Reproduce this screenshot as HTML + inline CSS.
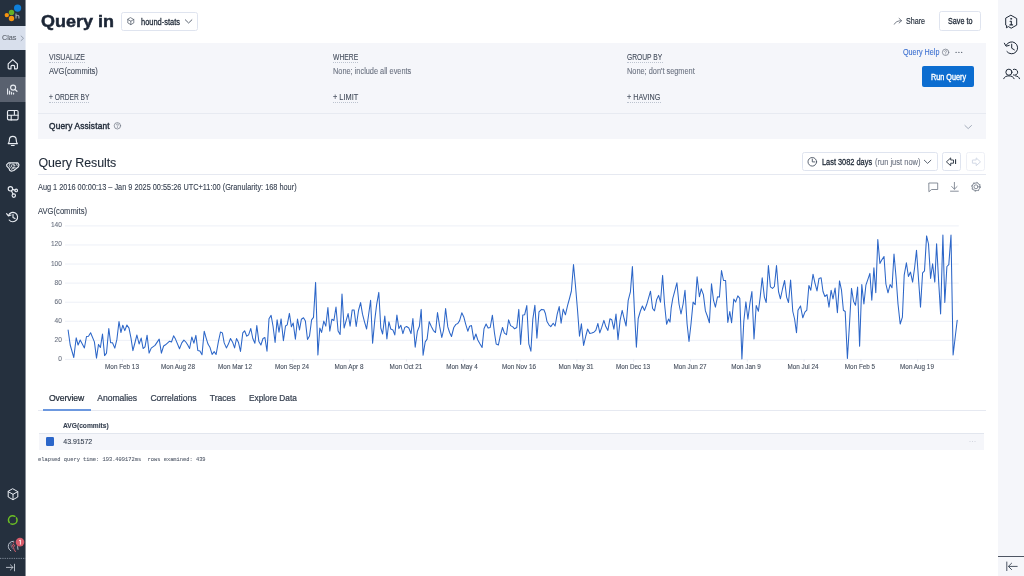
<!DOCTYPE html>
<html><head><meta charset="utf-8"><title>Query</title>
<style>
html,body{margin:0;padding:0;}
body{width:1024px;height:576px;overflow:hidden;background:#fff;font-family:"Liberation Sans",sans-serif;position:relative;}
.a{position:absolute;}
.t{position:absolute;white-space:pre;line-height:20px;height:20px;-webkit-text-stroke:0.1px;}
#wrap{position:absolute;left:0;top:0;width:1024px;height:576px;will-change:transform;}
.box{position:absolute;box-sizing:border-box;}
svg{position:absolute;overflow:visible;}
</style></head><body><div id="wrap">

<!-- left sidebar -->
<div class="box" style="left:0;top:0;width:26px;height:576px;background:#25303e;"></div>
<div class="box" style="left:0;top:25.9px;width:26px;height:24.4px;background:#d8dfec;"></div>
<div class="box" style="left:0;top:76.8px;width:26px;height:25.6px;background:#59616f;"></div>
<div class="box" style="left:25px;top:0;width:1px;height:576px;background:rgba(255,255,255,0.45);z-index:3;"></div>
<!-- right rail -->
<div class="box" style="left:998.2px;top:0;width:25.8px;height:576px;background:#f5f6fa;"></div>
<div class="box" style="left:998.2px;top:555.9px;width:25.8px;height:1.1px;background:#4e5563;"></div>
<!-- query builder panel -->
<div class="box" style="left:38px;top:42.8px;width:947.9px;height:96px;background:#f5f6fa;"></div>
<div class="box" style="left:38px;top:112.8px;width:947.9px;height:1px;background:#e7eaf1;"></div>
<!-- dataset dropdown -->
<div class="box" style="left:120.6px;top:11.6px;width:77.8px;height:19px;border:1px solid #dfe4ef;border-radius:2.4px;background:#fff;"></div>
<!-- save to -->
<div class="box" style="left:938.7px;top:11.3px;width:42.5px;height:19.3px;border:1px solid #dfe4ef;border-radius:2.4px;background:#fff;"></div>
<!-- run query -->
<div class="box" style="left:921.8px;top:66.4px;width:52.5px;height:20.6px;background:#0c6dd0;border-radius:2px;"></div>
<!-- time range -->
<div class="box" style="left:802px;top:151.9px;width:135.6px;height:19.3px;border:1px solid #dfe4ef;border-radius:2.4px;background:#fff;"></div>
<div class="box" style="left:941.9px;top:151.9px;width:19.1px;height:19.3px;border:1px solid #dfe4ef;border-radius:2.4px;background:#fff;"></div>
<div class="box" style="left:965.7px;top:151.9px;width:19.3px;height:19.3px;border:1px solid #eef0f6;border-radius:2.4px;background:#fff;"></div>
<!-- rules -->
<div class="box" style="left:38px;top:173.6px;width:947.6px;height:1px;background:#e6e9f1;"></div>
<div class="box" style="left:38px;top:410px;width:947.6px;height:1px;background:#e6e9f1;"></div>
<div class="box" style="left:42.5px;top:409px;width:48.1px;height:1.6px;background:#6c98df;"></div>
<!-- table row -->
<div class="box" style="left:39px;top:433px;width:945.3px;height:17px;background:#f5f6fa;border-top:1px solid #e2e6ee;"></div>
<div class="box" style="left:46px;top:437.4px;width:8.3px;height:8.3px;background:#2b66c9;border-radius:1.3px;"></div>
<!-- dotted underlines -->
<div class="box" style="left:49.1px;top:61.5px;width:35.9px;border-top:1px dotted #bcc3cf;"></div>
<div class="box" style="left:332.75px;top:61.5px;width:25.2px;border-top:1px dotted #bcc3cf;"></div>
<div class="box" style="left:627.25px;top:61.5px;width:35.3px;border-top:1px dotted #bcc3cf;"></div>
<div class="box" style="left:49.1px;top:101.7px;width:40.4px;border-top:1px dotted #bcc3cf;"></div>
<div class="box" style="left:332.75px;top:101.7px;width:25.3px;border-top:1px dotted #bcc3cf;"></div>
<div class="box" style="left:627.25px;top:101.7px;width:33.3px;border-top:1px dotted #bcc3cf;"></div>

<svg class="a" style="left:0;top:0" width="1024" height="576" viewBox="0 0 1024 576">
<line x1="65" x2="958.8" y1="359.40" y2="359.40" stroke="#edf0f7" stroke-width="1"/>
<line x1="65" x2="958.8" y1="340.33" y2="340.33" stroke="#edf0f7" stroke-width="1"/>
<line x1="65" x2="958.8" y1="321.26" y2="321.26" stroke="#edf0f7" stroke-width="1"/>
<line x1="65" x2="958.8" y1="302.19" y2="302.19" stroke="#edf0f7" stroke-width="1"/>
<line x1="65" x2="958.8" y1="283.11" y2="283.11" stroke="#edf0f7" stroke-width="1"/>
<line x1="65" x2="958.8" y1="264.04" y2="264.04" stroke="#edf0f7" stroke-width="1"/>
<line x1="65" x2="958.8" y1="244.97" y2="244.97" stroke="#edf0f7" stroke-width="1"/>
<line x1="65" x2="958.8" y1="225.90" y2="225.90" stroke="#edf0f7" stroke-width="1"/>
<line x1="122.50" x2="122.50" y1="359.4" y2="361.6" stroke="#dfe3ee" stroke-width="0.8"/>
<line x1="179.30" x2="179.30" y1="359.4" y2="361.6" stroke="#dfe3ee" stroke-width="0.8"/>
<line x1="236.10" x2="236.10" y1="359.4" y2="361.6" stroke="#dfe3ee" stroke-width="0.8"/>
<line x1="292.90" x2="292.90" y1="359.4" y2="361.6" stroke="#dfe3ee" stroke-width="0.8"/>
<line x1="349.70" x2="349.70" y1="359.4" y2="361.6" stroke="#dfe3ee" stroke-width="0.8"/>
<line x1="406.50" x2="406.50" y1="359.4" y2="361.6" stroke="#dfe3ee" stroke-width="0.8"/>
<line x1="463.30" x2="463.30" y1="359.4" y2="361.6" stroke="#dfe3ee" stroke-width="0.8"/>
<line x1="520.10" x2="520.10" y1="359.4" y2="361.6" stroke="#dfe3ee" stroke-width="0.8"/>
<line x1="576.90" x2="576.90" y1="359.4" y2="361.6" stroke="#dfe3ee" stroke-width="0.8"/>
<line x1="633.70" x2="633.70" y1="359.4" y2="361.6" stroke="#dfe3ee" stroke-width="0.8"/>
<line x1="690.50" x2="690.50" y1="359.4" y2="361.6" stroke="#dfe3ee" stroke-width="0.8"/>
<line x1="747.30" x2="747.30" y1="359.4" y2="361.6" stroke="#dfe3ee" stroke-width="0.8"/>
<line x1="804.10" x2="804.10" y1="359.4" y2="361.6" stroke="#dfe3ee" stroke-width="0.8"/>
<line x1="860.90" x2="860.90" y1="359.4" y2="361.6" stroke="#dfe3ee" stroke-width="0.8"/>
<line x1="917.70" x2="917.70" y1="359.4" y2="361.6" stroke="#dfe3ee" stroke-width="0.8"/>
<polyline fill="none" stroke="#2c66c8" stroke-width="1.05" stroke-linejoin="round" stroke-linecap="round" points="68.1,330.0 70.2,345.0 73.8,357.5 76.2,337.8 78.1,345.0 80.2,340.0 84.4,347.9 86.5,336.5 88.5,336.2 90.6,332.8 94.4,341.9 96.5,358.1 98.5,344.4 100.4,347.5 102.5,334.0 104.6,355.6 106.5,353.1 108.8,328.5 110.6,342.8 112.5,342.8 114.8,348.1 116.9,339.4 119.0,321.5 120.9,332.5 122.8,325.2 124.8,330.6 126.9,325.0 129.0,328.1 131.0,338.1 132.9,350.6 135.0,342.5 136.9,335.0 139.1,344.0 141.2,338.1 143.1,348.5 145.0,346.9 147.1,335.2 149.1,353.1 151.2,348.1 155.0,345.4 159.2,339.1 161.4,353.2 163.6,346.0 165.5,344.8 169.6,341.2 171.5,342.0 173.6,335.8 175.5,339.1 179.5,348.8 181.8,342.9 183.9,340.1 185.8,342.0 187.6,344.8 189.6,348.5 191.8,337.0 193.9,343.2 195.9,335.4 197.8,350.4 199.9,351.0 202.0,354.8 204.2,331.2 206.1,337.9 208.0,344.1 209.9,347.2 212.1,354.4 214.2,351.6 216.1,354.5 218.4,341.6 220.5,332.0 222.4,332.9 224.2,342.9 226.4,347.9 228.4,344.1 230.5,338.5 232.6,342.2 234.6,347.9 236.5,338.5 238.4,342.2 240.5,351.4 242.8,332.9 244.6,330.8 246.8,336.2 248.6,334.8 250.8,328.5 252.8,338.5 254.9,343.2 256.8,325.6 258.9,341.6 260.9,345.0 263.0,338.5 264.9,337.5 267.0,351.2 269.0,318.8 271.1,315.4 273.0,326.0 275.1,342.5 277.1,319.8 279.0,332.2 281.1,318.9 283.4,340.8 285.5,326.0 287.2,324.9 289.4,313.4 291.4,326.8 293.2,323.0 295.4,339.2 297.5,319.0 299.5,329.9 301.4,319.2 303.5,317.8 305.4,321.1 307.5,339.5 309.5,336.1 311.6,319.9 313.5,317.4 315.6,282.4 317.9,354.9 319.8,328.0 321.6,332.4 323.8,321.1 325.8,326.1 327.9,307.6 329.8,331.1 331.9,319.2 333.9,320.5 336.0,307.0 338.1,331.1 340.1,334.5 342.0,294.0 344.1,328.0 346.0,321.1 348.1,313.6 350.1,326.1 352.2,309.9 354.1,309.9 356.2,326.5 358.5,310.5 360.6,302.6 362.5,314.2 364.5,321.8 366.6,329.0 368.5,315.5 370.6,300.2 372.6,343.2 374.8,319.9 376.6,304.9 378.8,292.4 380.8,328.0 382.6,334.0 384.8,316.1 386.9,339.0 388.9,321.8 390.8,329.0 392.9,329.9 394.8,334.9 396.9,315.1 398.9,328.6 400.8,325.2 402.9,333.6 404.8,327.4 406.6,326.5 408.8,328.0 411.0,333.6 412.9,318.6 415.2,347.2 417.4,331.2 419.4,326.2 421.2,309.4 423.1,355.2 425.2,341.9 427.1,339.1 429.2,321.6 431.2,326.2 433.4,330.6 435.5,332.5 437.5,312.5 439.6,326.2 441.8,337.5 443.6,330.0 445.6,308.5 447.8,326.9 449.6,332.5 451.5,336.5 453.8,327.5 455.9,324.4 457.8,323.5 459.6,320.6 461.8,312.8 463.8,316.9 465.6,323.8 467.8,331.2 469.6,326.2 471.5,325.6 473.8,339.8 475.9,334.0 477.8,340.0 479.9,343.8 482.1,347.5 484.0,328.8 486.1,324.0 488.1,328.1 490.2,327.5 492.4,315.2 494.4,332.5 496.2,344.0 498.4,345.0 500.2,336.2 502.5,327.5 504.4,333.1 506.5,334.6 508.6,319.8 510.6,325.6 512.8,326.9 514.6,328.8 516.8,327.5 518.8,309.4 520.6,344.4 522.8,315.0 524.6,314.8 526.8,305.6 528.8,343.8 530.9,351.2 532.8,319.4 534.9,305.2 536.9,338.1 539.0,311.9 541.5,309.4 543.9,309.8 545.4,313.5 547.0,321.6 548.9,324.8 550.8,326.6 553.2,323.2 555.1,326.0 557.2,314.1 559.2,306.6 561.1,323.2 563.2,309.1 565.4,314.8 567.6,305.4 569.5,298.5 571.4,291.0 573.5,264.5 575.5,286.0 577.4,308.5 579.5,336.2 581.4,323.8 583.6,345.4 585.8,336.0 587.6,329.1 589.8,333.5 591.8,333.1 593.9,332.2 595.8,330.4 597.9,323.5 599.8,332.9 601.8,327.2 603.9,320.4 605.8,326.6 607.9,330.4 609.9,318.8 611.8,319.8 613.9,329.1 616.0,314.1 618.0,339.8 620.1,320.4 622.2,310.4 624.1,318.5 626.1,326.0 628.2,300.4 630.4,291.9 632.4,266.6 634.5,312.2 636.4,347.2 638.2,318.5 640.4,311.0 642.4,306.0 644.5,310.4 646.6,304.8 648.6,297.9 650.5,291.2 652.6,308.5 654.5,310.8 656.6,299.8 658.6,295.4 660.5,302.2 662.6,275.4 664.5,303.5 666.6,324.2 668.5,319.1 670.0,322.1 671.2,307.8 672.8,298.4 675.0,290.2 676.9,282.8 679.0,304.0 681.0,314.0 683.1,304.0 685.0,290.2 687.1,324.0 689.0,341.5 691.0,324.0 693.1,302.1 695.2,304.6 697.1,276.8 699.4,296.8 701.2,288.8 703.4,294.6 705.4,310.9 707.5,316.5 709.4,322.8 711.5,283.8 713.5,300.2 715.4,307.1 717.5,296.8 719.4,297.1 721.5,270.5 723.5,280.5 725.6,280.5 727.8,322.5 729.8,311.5 731.6,322.8 733.8,299.0 735.6,302.1 737.8,295.9 739.8,298.4 741.9,359.0 743.8,321.5 745.9,301.9 747.9,319.2 750.0,302.8 751.9,291.5 754.0,339.0 756.2,305.5 758.4,311.2 760.2,297.1 762.2,277.8 764.4,297.1 766.2,302.5 768.4,265.5 770.4,286.8 772.5,288.4 774.4,286.5 776.5,265.5 778.5,291.5 780.4,298.8 782.5,289.0 784.6,280.5 786.6,297.1 788.5,302.5 790.6,280.0 792.8,311.5 794.6,319.0 796.5,332.8 798.0,310.2 800.5,305.9 802.8,317.8 804.9,312.1 806.8,310.2 808.9,285.5 810.8,290.2 813.0,274.2 814.9,282.8 817.0,290.9 819.0,278.4 821.1,277.8 823.0,291.5 824.9,296.5 827.0,294.6 829.0,307.1 831.1,290.2 833.0,299.0 835.1,288.0 837.4,312.8 839.5,280.9 841.5,290.2 843.4,310.2 845.2,311.5 847.4,358.4 849.5,324.0 851.5,288.4 853.6,301.5 855.5,305.2 857.6,287.1 859.6,346.2 861.8,284.6 863.9,304.0 865.9,285.2 867.8,279.6 869.9,273.4 871.8,300.2 873.9,267.8 875.8,292.8 877.8,239.6 879.9,263.4 882.0,259.6 884.0,256.5 885.9,284.0 888.0,292.8 890.1,284.6 892.0,287.8 894.0,254.0 896.1,277.8 898.0,304.0 900.2,324.0 902.4,317.1 904.2,275.2 906.4,262.8 908.4,276.5 910.5,272.1 912.6,282.1 914.6,267.8 916.5,250.2 918.6,280.2 920.5,307.1 922.6,272.8 924.5,270.9 926.6,235.9 928.5,244.0 930.6,278.4 932.6,263.8 934.8,282.1 936.6,243.8 938.8,284.0 940.6,314.0 942.9,235.0 944.8,302.5 946.9,266.5 948.8,264.6 951.0,235.0 953.1,355.0 957.2,320.2"/>
</svg>
<div class="t" style="left:30px;width:31.9px;text-align:right;top:348.90px;font-size:6.9px;color:#6b7280;transform-origin:100% 50%;transform:scaleX(0.95);">0</div>
<div class="t" style="left:30px;width:31.9px;text-align:right;top:329.83px;font-size:6.9px;color:#6b7280;transform-origin:100% 50%;transform:scaleX(0.95);">20</div>
<div class="t" style="left:30px;width:31.9px;text-align:right;top:310.76px;font-size:6.9px;color:#6b7280;transform-origin:100% 50%;transform:scaleX(0.95);">40</div>
<div class="t" style="left:30px;width:31.9px;text-align:right;top:291.69px;font-size:6.9px;color:#6b7280;transform-origin:100% 50%;transform:scaleX(0.95);">60</div>
<div class="t" style="left:30px;width:31.9px;text-align:right;top:272.61px;font-size:6.9px;color:#6b7280;transform-origin:100% 50%;transform:scaleX(0.95);">80</div>
<div class="t" style="left:30px;width:31.9px;text-align:right;top:253.54px;font-size:6.9px;color:#6b7280;transform-origin:100% 50%;transform:scaleX(0.95);">100</div>
<div class="t" style="left:30px;width:31.9px;text-align:right;top:234.47px;font-size:6.9px;color:#6b7280;transform-origin:100% 50%;transform:scaleX(0.95);">120</div>
<div class="t" style="left:30px;width:31.9px;text-align:right;top:215.40px;font-size:6.9px;color:#6b7280;transform-origin:100% 50%;transform:scaleX(0.95);">140</div>
<div class="t" style="left:91.60px;width:60px;text-align:center;top:356.60px;font-size:6.9px;color:#434c5b;transform:scaleX(0.92);">Mon Feb 13</div>
<div class="t" style="left:148.40px;width:60px;text-align:center;top:356.60px;font-size:6.9px;color:#434c5b;transform:scaleX(0.92);">Mon Aug 28</div>
<div class="t" style="left:205.20px;width:60px;text-align:center;top:356.60px;font-size:6.9px;color:#434c5b;transform:scaleX(0.92);">Mon Mar 12</div>
<div class="t" style="left:262.00px;width:60px;text-align:center;top:356.60px;font-size:6.9px;color:#434c5b;transform:scaleX(0.92);">Mon Sep 24</div>
<div class="t" style="left:318.80px;width:60px;text-align:center;top:356.60px;font-size:6.9px;color:#434c5b;transform:scaleX(0.92);">Mon Apr 8</div>
<div class="t" style="left:375.60px;width:60px;text-align:center;top:356.60px;font-size:6.9px;color:#434c5b;transform:scaleX(0.92);">Mon Oct 21</div>
<div class="t" style="left:432.40px;width:60px;text-align:center;top:356.60px;font-size:6.9px;color:#434c5b;transform:scaleX(0.92);">Mon May 4</div>
<div class="t" style="left:489.20px;width:60px;text-align:center;top:356.60px;font-size:6.9px;color:#434c5b;transform:scaleX(0.92);">Mon Nov 16</div>
<div class="t" style="left:546.00px;width:60px;text-align:center;top:356.60px;font-size:6.9px;color:#434c5b;transform:scaleX(0.92);">Mon May 31</div>
<div class="t" style="left:602.80px;width:60px;text-align:center;top:356.60px;font-size:6.9px;color:#434c5b;transform:scaleX(0.92);">Mon Dec 13</div>
<div class="t" style="left:659.60px;width:60px;text-align:center;top:356.60px;font-size:6.9px;color:#434c5b;transform:scaleX(0.92);">Mon Jun 27</div>
<div class="t" style="left:716.40px;width:60px;text-align:center;top:356.60px;font-size:6.9px;color:#434c5b;transform:scaleX(0.92);">Mon Jan 9</div>
<div class="t" style="left:773.20px;width:60px;text-align:center;top:356.60px;font-size:6.9px;color:#434c5b;transform:scaleX(0.92);">Mon Jul 24</div>
<div class="t" style="left:830.00px;width:60px;text-align:center;top:356.60px;font-size:6.9px;color:#434c5b;transform:scaleX(0.92);">Mon Feb 5</div>
<div class="t" style="left:886.80px;width:60px;text-align:center;top:356.60px;font-size:6.9px;color:#434c5b;transform:scaleX(0.92);">Mon Aug 19</div>
<div class="t" id="t0" style="left:40.90px;top:11.30px;font-size:17.20px;font-weight:700;color:#1c2636;font-family:'Liberation Sans', sans-serif;letter-spacing:0.000px;-webkit-text-stroke:0.5px;transform-origin:0 50%;transform:scaleX(1.0454);">Query in</div>
<div class="t" id="t1" style="left:140.60px;top:11.50px;font-size:8.30px;font-weight:400;color:#1f2937;font-family:'Liberation Sans', sans-serif;letter-spacing:0.000px;-webkit-text-stroke:0.28px;transform-origin:0 50%;transform:scaleX(0.8995);">hound-stats</div>
<div class="t" id="t2" style="left:905.90px;top:10.80px;font-size:8.30px;font-weight:400;color:#1f2937;font-family:'Liberation Sans', sans-serif;letter-spacing:0.000px;-webkit-text-stroke:0.15px;transform-origin:0 50%;transform:scaleX(0.8627);">Share</div>
<div class="t" id="t3" style="left:947.60px;top:10.70px;font-size:8.30px;font-weight:400;color:#1f2937;font-family:'Liberation Sans', sans-serif;letter-spacing:0.000px;-webkit-text-stroke:0.28px;transform-origin:0 50%;transform:scaleX(0.8671);">Save to</div>
<div class="t" id="t4" style="left:2.20px;top:28.10px;font-size:8.00px;font-weight:400;color:#5b616b;font-family:'Liberation Sans', sans-serif;letter-spacing:0.000px;transform-origin:0 50%;transform:scaleX(0.8991);">Clas</div>
<div class="t" id="t5" style="left:49.10px;top:47.00px;font-size:8.30px;font-weight:400;color:#434c5b;font-family:'Liberation Sans', sans-serif;letter-spacing:0.000px;transform-origin:0 50%;transform:scaleX(0.8463);">VISUALIZE</div>
<div class="t" id="t6" style="left:49.10px;top:61.40px;font-size:8.30px;font-weight:400;color:#434c5b;font-family:'Liberation Sans', sans-serif;letter-spacing:0.000px;transform-origin:0 50%;transform:scaleX(0.9170);">AVG(commits)</div>
<div class="t" id="t7" style="left:49.10px;top:87.20px;font-size:8.30px;font-weight:400;color:#434c5b;font-family:'Liberation Sans', sans-serif;letter-spacing:0.000px;transform-origin:0 50%;transform:scaleX(0.8000);">+ ORDER BY</div>
<div class="t" id="t8" style="left:332.75px;top:47.00px;font-size:8.30px;font-weight:400;color:#434c5b;font-family:'Liberation Sans', sans-serif;letter-spacing:0.000px;transform-origin:0 50%;transform:scaleX(0.8142);">WHERE</div>
<div class="t" id="t9" style="left:332.75px;top:61.40px;font-size:8.30px;font-weight:400;color:#6b7280;font-family:'Liberation Sans', sans-serif;letter-spacing:0.000px;transform-origin:0 50%;transform:scaleX(0.8883);">None; include all events</div>
<div class="t" id="t10" style="left:332.75px;top:87.20px;font-size:8.30px;font-weight:400;color:#434c5b;font-family:'Liberation Sans', sans-serif;letter-spacing:0.000px;transform-origin:0 50%;transform:scaleX(0.8904);">+ LIMIT</div>
<div class="t" id="t11" style="left:627.25px;top:47.00px;font-size:8.30px;font-weight:400;color:#434c5b;font-family:'Liberation Sans', sans-serif;letter-spacing:0.000px;transform-origin:0 50%;transform:scaleX(0.8074);">GROUP BY</div>
<div class="t" id="t12" style="left:627.25px;top:61.40px;font-size:8.30px;font-weight:400;color:#6b7280;font-family:'Liberation Sans', sans-serif;letter-spacing:0.000px;transform-origin:0 50%;transform:scaleX(0.8878);">None; don't segment</div>
<div class="t" id="t13" style="left:627.25px;top:87.20px;font-size:8.30px;font-weight:400;color:#434c5b;font-family:'Liberation Sans', sans-serif;letter-spacing:0.000px;transform-origin:0 50%;transform:scaleX(0.8668);">+ HAVING</div>
<div class="t" id="t14" style="left:903.40px;top:42.00px;font-size:8.30px;font-weight:400;color:#3a6fd0;font-family:'Liberation Sans', sans-serif;letter-spacing:0.000px;transform-origin:0 50%;transform:scaleX(0.8673);">Query Help</div>
<div class="t" id="t15" style="left:930.90px;top:66.50px;font-size:8.30px;font-weight:400;color:#ffffff;font-family:'Liberation Sans', sans-serif;letter-spacing:0.000px;-webkit-text-stroke:0.35px;transform-origin:0 50%;transform:scaleX(0.8723);">Run Query</div>
<div class="t" id="t16" style="left:49.10px;top:116.10px;font-size:8.30px;font-weight:400;color:#1f2937;font-family:'Liberation Sans', sans-serif;letter-spacing:0.166px;-webkit-text-stroke:0.4px;">Query Assistant</div>
<div class="t" id="t17" style="left:38.40px;top:152.60px;font-size:12.40px;font-weight:400;color:#1f2937;font-family:'Liberation Sans', sans-serif;letter-spacing:-0.051px;">Query Results</div>
<div class="t" id="t18" style="left:38.40px;top:176.70px;font-size:8.30px;font-weight:400;color:#374151;font-family:'Liberation Sans', sans-serif;letter-spacing:0.000px;transform-origin:0 50%;transform:scaleX(0.8854);">Aug 1 2016 00:00:13 – Jan 9 2025 00:55:26 UTC+11:00 (Granularity: 168 hour)</div>
<div class="t" id="t19" style="left:821.90px;top:151.70px;font-size:8.30px;font-weight:400;color:#1f2937;font-family:'Liberation Sans', sans-serif;letter-spacing:0.000px;-webkit-text-stroke:0.28px;transform-origin:0 50%;transform:scaleX(0.8902);">Last 3082 days</div>
<div class="t" id="t20" style="left:874.50px;top:151.70px;font-size:8.30px;font-weight:400;color:#6b7280;font-family:'Liberation Sans', sans-serif;letter-spacing:0.000px;transform-origin:0 50%;transform:scaleX(0.9052);">(run just now)</div>
<div class="t" id="t21" style="left:38.20px;top:202.00px;font-size:8.20px;font-weight:400;color:#374151;font-family:'Liberation Sans', sans-serif;letter-spacing:0.000px;transform-origin:0 50%;transform:scaleX(0.9311);">AVG(commits)</div>
<div class="t" id="t22" style="left:49.00px;top:388.20px;font-size:8.60px;font-weight:400;color:#1f2937;font-family:'Liberation Sans', sans-serif;letter-spacing:-0.104px;-webkit-text-stroke:0.22px;">Overview</div>
<div class="t" id="t23" style="left:97.25px;top:388.20px;font-size:8.60px;font-weight:400;color:#374151;font-family:'Liberation Sans', sans-serif;letter-spacing:-0.042px;-webkit-text-stroke:0.22px;">Anomalies</div>
<div class="t" id="t24" style="left:150.40px;top:388.20px;font-size:8.60px;font-weight:400;color:#374151;font-family:'Liberation Sans', sans-serif;letter-spacing:-0.012px;-webkit-text-stroke:0.22px;">Correlations</div>
<div class="t" id="t25" style="left:209.75px;top:388.20px;font-size:8.60px;font-weight:400;color:#374151;font-family:'Liberation Sans', sans-serif;letter-spacing:-0.051px;-webkit-text-stroke:0.22px;">Traces</div>
<div class="t" id="t26" style="left:248.50px;top:388.20px;font-size:8.60px;font-weight:400;color:#374151;font-family:'Liberation Sans', sans-serif;letter-spacing:0.000px;-webkit-text-stroke:0.22px;transform-origin:0 50%;transform:scaleX(0.9620);">Explore Data</div>
<div class="t" id="t27" style="left:63.30px;top:416.00px;font-size:6.90px;font-weight:700;color:#374151;font-family:'Liberation Sans', sans-serif;letter-spacing:0.000px;transform-origin:0 50%;transform:scaleX(0.9650);">AVG(commits)</div>
<div class="t" id="t28" style="left:63.30px;top:431.60px;font-size:7.00px;font-weight:400;color:#374151;font-family:'Liberation Sans', sans-serif;letter-spacing:-0.038px;">43.91572</div>
<div class="t" id="t29" style="left:38.40px;top:449.80px;font-size:5.60px;font-weight:400;color:#5a6270;font-family:'Liberation Mono', monospace;letter-spacing:0.000px;transform-origin:0 50%;transform:scaleX(0.9601);">elapsed query time: 193.409172ms  rows examined: 439</div>
<svg class="a" style="left:0;top:0" width="1024" height="576" viewBox="0 0 1024 576" fill="none" stroke-linecap="round" stroke-linejoin="round">
<!-- logo -->
<circle cx="17.6" cy="8.1" r="3.6" fill="#0f7fd9"/>
<circle cx="11.5" cy="12.4" r="2.7" fill="#64af28"/>
<circle cx="6.8" cy="15.1" r="2.2" fill="#f5930f"/>
<circle cx="11.5" cy="18.5" r="2.7" fill="#f5930f"/>
<path d="M16 13.4V18.6M16 16.4C16 14.9 18.9 14.7 18.9 16.6V18.6" stroke="#9aa2ae" stroke-width="1.15" stroke-linecap="butt"/>
<!-- Clas chevron -->
<path d="M21.1 36L23.5 38.3L21.1 40.6" stroke="#8f98a8" stroke-width="0.9"/>
<!-- sidebar icons -->
<g stroke="#e8ecf2" stroke-width="1.15">
<path d="M8.2 63.8L12.8 59.6L17.4 63.8V68.1C17.4 68.6 17.1 68.9 16.6 68.9H14.6V66.3C14.6 65.1 11 65.1 11 66.3V68.9H9C8.5 68.9 8.2 68.6 8.2 68.1Z"/>
<!-- query -->
<path d="M7.6 88.8V94.1M9.6 91V94.1M11.6 92.4V94.1M13.6 93V94.1"/>
<circle cx="13.1" cy="87.6" r="2.5"/>
<path d="M15 89.5L17 91.3"/>
<!-- boards -->
<rect x="7.5" y="110.5" width="10.6" height="9.4" rx="1.3"/>
<path d="M7.5 115.2H18.1M14.4 110.5V115.2M11.2 115.2V119.9"/>
<!-- bell -->
<path d="M8.2 143.6C9.2 142.6 9.4 141.4 9.4 139.8A3.4 3.4 0 0 1 16.2 139.8C16.2 141.4 16.4 142.6 17.4 143.6Z"/>
<path d="M11.4 145.5H14.2"/>
<!-- handshake -->
<path d="M8.6 162.9H17.8L19 164.9L18.5 166.7L13.8 170.5L11.3 171.2L9.6 170.2L9.2 168.6L6.8 166.2L6.7 164.7Z" stroke-width="1.15"/>
<path d="M14.9 165.6A1.8 1.8 0 1 0 14.2 167.4M10.2 163.4L9.2 165.6L10.6 168M13 165.9H14.9M16.4 163.6L17.2 165.6M11.4 169.2L15.2 167.6" stroke-width="0.85"/>
<!-- graph -->
<circle cx="10.4" cy="188.8" r="2.2"/>
<circle cx="16.2" cy="190.4" r="1.3"/>
<circle cx="13.8" cy="195.6" r="1.7"/>
<path d="M12.5 189.4L14.9 190.1M11.4 190.8L13 194.1"/>
<!-- history -->
<path d="M8.5 215.4A4.7 4.7 0 1 1 9.2 220"/>
<path d="M6.6 213.6L8.4 215.9L11 215"/>
<path d="M13 214.4V217.4L15 218.6"/>
<!-- cube -->
<path d="M13 488.9L17.8 491.6V497L13 499.7L8.2 497V491.6Z" stroke-width="1"/>
<path d="M8.2 491.6L13 494.3L17.8 491.6M13 494.3V499.7" stroke-width="1"/>
</g>
<!-- green status -->
<circle cx="12.75" cy="520" r="4.3" stroke="#6cc024" stroke-width="1.5" stroke-dasharray="11.5 2" stroke-dashoffset="3"/>
<!-- avatar -->
<circle cx="12.9" cy="546.2" r="5" fill="#2b3545"/>
<path d="M13.4 541.3C10.2 541.2 8.2 543.6 8.3 546.4C8.4 548.4 9.4 550 10.8 550.8" stroke="#b9c0cb" stroke-width="1"/>
<path d="M11 543.6C10.6 545.4 11.4 547.4 12.4 548.4" stroke="#8a93a3" stroke-width="0.7"/>
<path d="M12.2 546.4L13.4 544.2L14.6 545.6L13.4 547.4L14.2 549.6L15.4 551.6M13.2 543L14 542.4" stroke="#dd5d6c" stroke-width="1"/>
<path d="M17.6 546.6L18 549.4" stroke="#c5cad3" stroke-width="0.9"/>
<circle cx="20" cy="542.1" r="4.3" fill="#d85c6b"/>
<path d="M19.4 540.5L20.4 540V544.2" stroke="#fff" stroke-width="0.85"/>
<!-- dashed sep + collapse -->
<path d="M0 558.4H25.6" stroke="#858e9d" stroke-width="0.9" stroke-dasharray="1.3 1" stroke-linecap="butt"/>
<path d="M6.4 567.4H13M10.4 564.8L13 567.4L10.4 570M14.5 564.2V570.9" stroke="#c3c9d3" stroke-width="0.9"/>

<!-- right rail icons -->
<g stroke="#1f2937" stroke-width="1">
<path d="M1011.2 15.4L1016.7 18.5V25.1L1011.2 28.2L1008.4 26.6L1006.4 27.8L1006.7 25.6L1005.7 25.1V18.5Z"/>
<path d="M1011.3 21.2V24.8M1009.9 24.9H1012.6M1010.1 21.2H1011.3" stroke-width="1.1"/>
<circle cx="1011.1" cy="18.8" r="0.55" fill="#1f2937" stroke-width="0.7"/>
<path d="M1006.2 45.2A6 6 0 1 1 1006.9 51.6"/>
<path d="M1004.4 43.2L1006 46.2L1009.2 45.4"/>
<path d="M1011.7 44.2V48.2L1014.4 49.9"/>
<!-- people -->
<circle cx="1008.9" cy="72.2" r="3.05"/>
<path d="M1003.7 78.7C1004.4 76.7 1006.4 75.9 1008.9 75.9C1011.4 75.9 1013.4 76.7 1014.1 78.7"/>
<path d="M1013.4 69.4A3.05 3.05 0 1 1 1013.4 75"/>
<path d="M1015.6 75.9C1017.7 76.1 1019 77 1019.5 78.7"/>
</g>
<path d="M1006.8 562V570.6M1017.2 566.4H1008.6M1011.6 563.2L1008.4 566.4L1011.6 569.6" stroke="#4b5563" stroke-width="1"/>

<!-- dataset dropdown icons -->
<path d="M130.8 17.8L133.8 19.5V22.9L130.8 24.6L127.8 22.9V19.5Z M127.8 19.5L130.8 21.2L133.8 19.5M130.8 21.2V24.6" stroke="#4b5563" stroke-width="0.7"/>
<path d="M185.3 19.8L188.6 23L191.9 19.8" stroke="#4b5563" stroke-width="0.9"/>
<!-- share -->
<path d="M894.3 24.2C895.4 21.8 897.8 20.7 901.4 20.7M899.1 18.4L901.6 20.7L899.1 23" stroke="#5a6270" stroke-width="0.8"/>
<!-- query help -->
<circle cx="945.6" cy="52.3" r="3.2" stroke="#6b7280" stroke-width="0.7"/>
<path d="M944.6 51.3C944.6 50.2 946.6 50.2 946.6 51.3C946.6 52 945.6 52 945.6 52.9M945.6 54V54.1" stroke="#6b7280" stroke-width="0.65"/>
<circle cx="956.1" cy="52.4" r="0.6" fill="#4b5563"/><circle cx="958.9" cy="52.4" r="0.6" fill="#4b5563"/><circle cx="961.7" cy="52.4" r="0.6" fill="#4b5563"/>
<!-- query assistant help + chevron -->
<circle cx="117.4" cy="125.8" r="3.2" stroke="#6b7280" stroke-width="0.7"/>
<path d="M116.4 124.8C116.4 123.7 118.4 123.7 118.4 124.8C118.4 125.5 117.4 125.5 117.4 126.4M117.4 127.5V127.6" stroke="#6b7280" stroke-width="0.65"/>
<path d="M964.9 125.5L968.2 128.6L971.5 125.5" stroke="#9aa3b2" stroke-width="0.9"/>
<!-- time box -->
<circle cx="812.3" cy="161.8" r="4.3" stroke="#4b5563" stroke-width="0.9"/>
<path d="M812.3 159V161.9H814.8" stroke="#4b5563" stroke-width="0.9"/>
<path d="M924.3 160.2L927.6 163.4L930.9 160.2" stroke="#4b5563" stroke-width="0.9"/>
<path d="M946.7 161.6L950.7 157.9V160H953.5V163.2H950.7V165.3Z" stroke="#1f2937" stroke-width="0.85"/>
<path d="M955.6 159.6V163.6" stroke="#1f2937" stroke-width="1"/>
<path d="M980.2 161.6L976.2 157.9V160H972.4V163.2H976.2V165.3Z" stroke="#d3d9e6" stroke-width="1"/>
<!-- comment / download / gear -->
<path d="M929.2 183H937.7V189.5H931.6L929.2 191.5Z" stroke="#6b7482" stroke-width="0.8"/>
<path d="M954.4 182.4V189.1M951.7 186.5L954.4 189.2L957.1 186.5M950.5 191.2H958.3" stroke="#6b7482" stroke-width="0.8"/>
<circle cx="976" cy="186.8" r="2" stroke="#6b7482" stroke-width="0.8"/>
<circle cx="976" cy="186.8" r="3.9" stroke="#6b7482" stroke-width="0.8"/>
<circle cx="976" cy="186.8" r="4.5" stroke="#6b7482" stroke-width="0.8" stroke-dasharray="1.3 2.23" stroke-linecap="butt"/>
<!-- row menu -->
<circle cx="970" cy="441.6" r="0.45" fill="#9aa3b2"/><circle cx="972.5" cy="441.6" r="0.45" fill="#9aa3b2"/><circle cx="975" cy="441.6" r="0.45" fill="#9aa3b2"/>
</svg>

</div></body></html>
